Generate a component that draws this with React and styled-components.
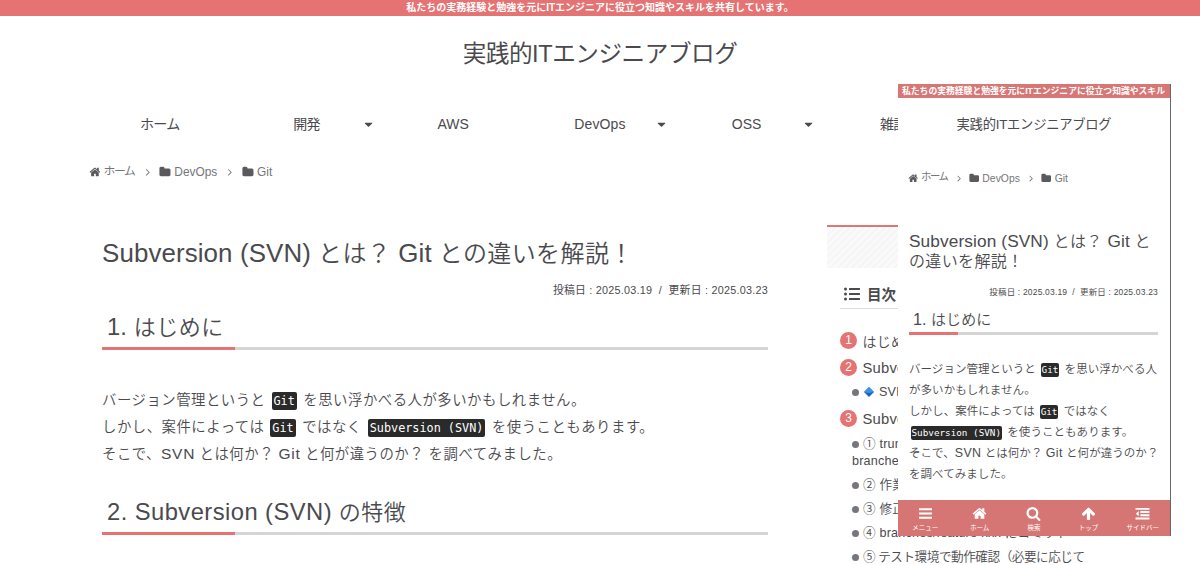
import React from "react";
import styled, { createGlobalStyle, css } from "styled-components";
import { FaListUl } from "react-icons/fa";

// #region - styling -

const colors = {
  accent: "#e57373",
  text: "#4a4a4e",
  muted: "#75757a",
  line: "#d5d5d5",
  code: "#2a2a2a",
};

const GlobalStyle = createGlobalStyle`
  * {
    box-sizing: border-box;
  }

  body {
    margin: 0;
    overflow: hidden;
    background: #fff;
    color: ${colors.text};
    font-family: "Liberation Sans", "Noto Sans CJK JP", sans-serif;
  }

  h1, h2, p, ul, ol {
    margin: 0;
    padding: 0;
    font-weight: 350;
    list-style: none;
  }
`;

const Page = styled.div`
  position: relative;
  width: 1200px;
  height: 565px;
  overflow: hidden;
`;

const Glyph = styled.svg`
  width: 1em;
  height: 1em;
  fill: currentColor;
  flex: none;
`;

const Notice = styled.div`
  height: ${(p) => (p.$small ? 14 : 16)}px;
  line-height: ${(p) => (p.$small ? 14 : 15)}px;
  padding-left: ${(p) => (p.$small ? 4 : 0)}px;
  background: ${(p) => (p.$small ? "#d77775" : colors.accent)};
  color: #fff;
  font-size: ${(p) => (p.$small ? 8.8 : 10)}px;
  font-weight: 700;
  text-align: ${(p) => (p.$small ? "left" : "center")};
  white-space: nowrap;
`;

const SiteName = styled.div`
  height: 75px;
  line-height: 76px;
  text-align: center;
  font-size: 23.6px;
  letter-spacing: -0.45px;
`;

const Nav = styled.nav`
  display: grid;
  grid-template-columns: repeat(6, 146.7px);
  padding-left: 86.5px;
  height: 66px;
`;

const NavItem = styled.div`
  position: relative;
  height: 66px;
  line-height: 67px;
  text-align: center;
  font-size: 14px;
  letter-spacing: ${(p) => (p.$kana ? -0.6 : 0.1)}px;

  svg {
    position: absolute;
    right: 5px;
    top: 27px;
    font-size: 13px;
  }
`;

const Crumbs = styled.div`
  display: flex;
  align-items: center;
  height: 20px;
  margin-top: 5px;
  padding-left: 88.5px;
  color: ${colors.muted};
  font-size: 11.9px;

  .icon {
    color: #5a5a5e;
    margin-right: 3px;
  }

  .sep {
    margin: 0 6px 0 7px;
  }

  .home {
    letter-spacing: -1.4px;
    line-height: 16px;
    margin-top: -2px;
  }

  ${(p) =>
    p.$small &&
    css`
      padding-left: 9.5px;
      font-size: 10.4px;

      .sep {
        margin: 0 5px 0 6px;
      }
    `}
`;

const Content = styled.div`
  display: flex;
  padding: 43px 0 0 102px;
`;

const Main = styled.main`
  width: 666px;
`;

const Title = styled.h1`
  margin-top: 11px;
  height: 37px;
  font-size: 24px;
  line-height: 36px;
  letter-spacing: 0.4px;
  white-space: nowrap;
`;

// Latin runs are set a bit larger than the kana next to them
const Wide = styled.span`
  font-size: 1.08em;
  line-height: 1;
  letter-spacing: ${(p) => p.$by || 0.1}px;
`;

const Dates = styled.div`
  height: 20px;
  line-height: 20px;
  margin-top: 7px;
  text-align: right;
  font-size: 10.8px;
  letter-spacing: 0.25px;
  white-space: pre;
`;

const Heading = styled.h2`
  height: 42px;
  margin-top: ${(p) => p.$top || 8}px;
  padding-left: 5px;
  border-bottom: 3px solid;
  border-image: linear-gradient(
      to right,
      ${colors.accent} 20%,
      ${colors.line} 20%
    )
    1;
  font-size: 22px;
  line-height: 40px;
  letter-spacing: 0.5px;
  white-space: nowrap;
`;

const Text = styled.p`
  margin-top: 37px;
  font-size: 14.4px;
  line-height: 27px;
  letter-spacing: 0.5px;
  white-space: nowrap;
`;

const Code = styled.code`
  display: inline-block;
  height: 18px;
  line-height: 18px;
  margin: 0 2px 0 1.5px;
  padding: 0 2px;
  border-radius: 2px;
  background: ${colors.code};
  color: #fff;
  font-family: "DejaVu Sans Mono", "Liberation Mono", monospace;
  font-size: 11.8px;
  letter-spacing: 0;
`;

const Side = styled.aside`
  width: 273px;
  margin-left: 59px;
`;

const Thumb = styled.div`
  height: 43px;
  border-top: 2px solid #dd7777;
  background: repeating-linear-gradient(
    135deg,
    #f6f6f6 0 2.5px,
    #fafafa 2.5px 5px
  );
`;

const TocTitle = styled.div`
  display: flex;
  align-items: center;
  gap: 7px;
  height: 41px;
  margin-left: 13px;
  padding: 11px 0 0 4px;
  border-bottom: 1px solid #ddd;
  font-size: 14.5px;
  font-weight: 700;

  svg {
    font-size: 16px;
  }
`;

const Toc = styled.ol`
  padding: 18px 0 0 13px;
`;

const Step = styled.li`
  display: flex;
  align-items: center;
  height: 27px;
  font-size: ${(p) => (p.$kana ? 14 : 14.8)}px;
  letter-spacing: 0.2px;

  span {
    width: 17px;
    height: 17px;
    margin-right: 5.5px;
    border-radius: 50%;
    background: ${colors.accent};
    color: #fff;
    font-size: 12px;
    line-height: 17px;
    text-align: center;
    letter-spacing: 0;
  }
`;

const SubStep = styled.li`
  padding: ${(p) => (p.$mark ? 3 : 4)}px 0 ${(p) => (p.$mark ? 2 : 0)}px 12px;
  min-height: 24.2px;
  margin-bottom: ${(p) => (p.$wrapped ? 2.5 : 0)}px;
  font-size: 12.6px;
  line-height: 17px;
  letter-spacing: ${(p) => (p.$kana ? -0.45 : 0.2)}px;
  white-space: pre;

  &::before {
    content: "";
    display: inline-block;
    width: 7px;
    height: 7px;
    margin-right: 4px;
    border-radius: 50%;
    background: #77777b;
  }

  svg {
    width: 10px;
    height: 10px;
    margin: 0 5px 0 1px;
    vertical-align: -1px;
  }
`;

const Phone = styled.section`
  position: absolute;
  left: 898px;
  top: 84px;
  width: 273px;
  height: 451.5px;
  border-right: 1px solid #68686b;
  overflow: hidden;
`;

const Screen = styled.div`
  height: 402px;
  background: #fff;

  ${SiteName} {
    height: 54px;
    line-height: 54px;
    font-size: 13.3px;
    letter-spacing: -0.25px;
  }

  ${Crumbs} {
    margin-top: 16px;
  }

  article {
    padding: 40px 12px 0 11px;
  }

  ${Title} {
    height: 40px;
    margin-top: 4px;
    font-size: 16px;
    line-height: 20px;
    letter-spacing: 0.35px;
  }

  ${Dates} {
    margin-top: 10px;
    font-size: 8.5px;
    letter-spacing: 0.18px;
  }

  ${Heading} {
    height: 33px;
    margin-top: 0;
    padding-left: 4px;
    font-size: 15px;
    line-height: 35px;
    letter-spacing: 0.1px;
  }

  ${Text} {
    margin-top: 24px;
    font-size: 11.5px;
    line-height: 21px;
    letter-spacing: 0.05px;
  }

  ${Code} {
    height: 14px;
    line-height: 14px;
    padding: 0 1px;
    font-size: 9.3px;
  }
`;

const TabBar = styled.div`
  display: grid;
  grid-template-columns: repeat(5, 1fr);
  height: 36px;
  background: #d67674;
  color: #fff;
`;

const Tab = styled.div`
  display: flex;
  flex-direction: column;
  align-items: center;
  padding-top: 6px;
  font-size: 6.5px;
  line-height: 13px;

  svg {
    font-size: 15px;
  }
`;

// #endregion

const icons = {
  home: "M1472 992v480q0 26-19 45t-45 19h-384v-384h-256v384h-384q-26 0-45-19t-19-45v-480q0-1 .5-3t.5-3l575-474 575 474q1 2 1 6zm223-69l-62 74q-8 9-21 11h-3q-13 0-21-7l-692-577-692 577q-12 8-24 7-13-2-21-11l-62-74q-8-10-7-23.5t11-21.5l719-599q32-26 76-26t76 26l244 204v-195q0-14 9-23t23-9h192q14 0 23 9t9 23v408l219 182q10 8 11 21.5t-7 23.5z",
  folder:
    "M1728 608v704q0 92-66 158t-158 66h-1216q-92 0-158-66t-66-158v-960q0-92 66-158t158-66h320q92 0 158 66t66 158v32h672q92 0 158 66t66 158z",
  angle:
    "M1171 960q0 13-10 23l-466 466q-10 10-23 10t-23-10l-50-50q-10-10-10-23t10-23l393-393-393-393q-10-10-10-23t10-23l50-50q10-10 23-10t23 10l466 466q10 10 10 23z",
  caret:
    "M1408 704q0 26-19 45l-448 448q-19 19-45 19t-45-19l-448-448q-19-19-19-45t19-45 45-19h896q26 0 45 19t19 45z",
  bars: "M128 256h1536v256h-1536zM128 768h1536v256h-1536zM128 1280h1536v256h-1536z",
  search:
    "M1216 832q0-185-131.5-316.5t-316.5-131.5-316.5 131.5-131.5 316.5 131.5 316.5 316.5 131.5 316.5-131.5 131.5-316.5zm512 832q0 52-38 90t-90 38q-54 0-90-38l-343-342q-179 124-399 124-143 0-273.5-55.5t-225-150-150-225-55.5-273.5 55.5-273.5 150-225 225-150 273.5-55.5 273.5 55.5 225 150 150 225 55.5 273.5q0 220-124 399l343 343q37 37 37 90z",
  up: "M1675 971q0 51-37 90l-75 75q-38 38-91 38-54 0-90-38l-294-293v704q0 52-37.5 84.5t-90.5 32.5h-128q-53 0-90.5-32.5t-37.5-84.5v-704l-294 293q-36 38-90 38t-90-38l-75-75q-38-38-38-90 0-53 38-91l651-651q35-37 90-37 54 0 91 37l651 651q37 39 37 91z",
  outdent:
    "M64 224h1664v224h-1664zM640 608h1088v224h-1088zM640 992h1088v224h-1088zM64 1376h1664v224h-1664zM448 600v624l-350-312z",
};

const notice = "私たちの実務経験と勉強を元にITエンジニアに役立つ知識やスキル";

const menu = [
  { label: "ホーム", kana: true },
  { label: "開発", kana: true, sub: true },
  { label: "AWS" },
  { label: "DevOps", sub: true },
  { label: "OSS", sub: true },
  { label: "雑記", kana: true },
];

const tabs = [
  { label: "メニュー", icon: "bars" },
  { label: "ホーム", icon: "home" },
  { label: "検索", icon: "search" },
  { label: "トップ", icon: "up" },
  { label: "サイドバー", icon: "outdent" },
];

function Icon({ name, className }) {
  return (
    <Glyph viewBox="0 0 1792 1792" className={className}>
      <path d={icons[name]} />
    </Glyph>
  );
}

function Breadcrumbs({ small }) {
  return (
    <Crumbs $small={small}>
      <Icon name="home" className="icon" />
      <span className="home">ホーム</span>
      <Icon name="angle" className="sep" />
      <Icon name="folder" className="icon" />
      DevOps
      <Icon name="angle" className="sep" />
      <Icon name="folder" className="icon" />
      Git
    </Crumbs>
  );
}

function Diamond() {
  return (
    <svg viewBox="0 0 10 10">
      <path d="M5 0L10 5L5 10L0 5Z" fill="#1b63c0" />
      <path d="M5 0L10 5L5 6L0 5Z" fill="#3f93e4" />
    </svg>
  );
}

export default function App() {
  return (
    <Page>
      <GlobalStyle />
      <Notice>{notice}を共有しています。</Notice>
      <SiteName>実践的ITエンジニアブログ</SiteName>
      <Nav>
        {menu.map(({ label, kana, sub }) => (
          <NavItem key={label} $kana={kana}>
            {label}
            {sub && <Icon name="caret" />}
          </NavItem>
        ))}
      </Nav>
      <Breadcrumbs />

      <Content>
        <Main>
          <Title>
            <Wide>Subversion (SVN)</Wide> とは？ <Wide>Git</Wide> との違いを解説！
          </Title>
          <Dates>投稿日 : 2025.03.19  /  更新日 : 2025.03.23</Dates>
          <Heading>
            <Wide>1.</Wide> はじめに
          </Heading>
          <Text>
            バージョン管理というと <Code>Git</Code> を思い浮かべる人が多いかもしれません。
            <br />
            しかし、案件によっては <Code>Git</Code> ではなく <Code>Subversion (SVN)</Code> を使うこともあります。
            <br />
            そこで、<Wide $by={0.7}>SVN</Wide> とは何か？ <Wide $by={0.7}>Git</Wide> と何が違うのか？ を調べてみました。
          </Text>
          <Heading $top={25}>
            <Wide $by={0.45}>2. Subversion (SVN)</Wide> の特徴
          </Heading>
        </Main>

        <Side>
          <Thumb />
          <TocTitle>
            <FaListUl />
            目次
          </TocTitle>
          <Toc>
            <Step $kana><span>1</span>はじめに</Step>
            <Step><span>2</span>Subversion</Step>
            <SubStep $mark><Diamond />SVN</SubStep>
            <Step><span>3</span>Subversion</Step>
            <SubStep $wrapped>① trunk{"\n"}branches</SubStep>
            <SubStep>② 作業</SubStep>
            <SubStep>③ 修正</SubStep>
            <SubStep>④ branches/feature-xxx にコミット</SubStep>
            <SubStep $kana>⑤ テスト環境で動作確認（必要に応じて</SubStep>
          </Toc>
        </Side>
      </Content>

      <Phone>
        <Notice $small>{notice}</Notice>
        <Screen>
          <SiteName>実践的ITエンジニアブログ</SiteName>
          <Breadcrumbs small />
          <article>
            <Title>
              <Wide>Subversion (SVN)</Wide> とは？ <Wide>Git</Wide> と
              <br />
              の違いを解説！
            </Title>
            <Dates>投稿日 : 2025.03.19  /  更新日 : 2025.03.23</Dates>
            <Heading>
              <Wide>1.</Wide> はじめに
            </Heading>
            <Text>
              バージョン管理というと <Code>Git</Code> を思い浮かべる人
              <br />
              が多いかもしれません。
              <br />
              しかし、案件によっては <Code>Git</Code> ではなく
              <br />
              <Code>Subversion (SVN)</Code> を使うこともあります。
              <br />
              そこで、<Wide $by={0.4}>SVN</Wide> とは何か？ <Wide $by={0.4}>Git</Wide> と何が違うのか？
              <br />
              を調べてみました。
            </Text>
          </article>
        </Screen>
        <TabBar>
          {tabs.map(({ label, icon }) => (
            <Tab key={label}>
              <Icon name={icon} />
              {label}
            </Tab>
          ))}
        </TabBar>
      </Phone>
    </Page>
  );
}
